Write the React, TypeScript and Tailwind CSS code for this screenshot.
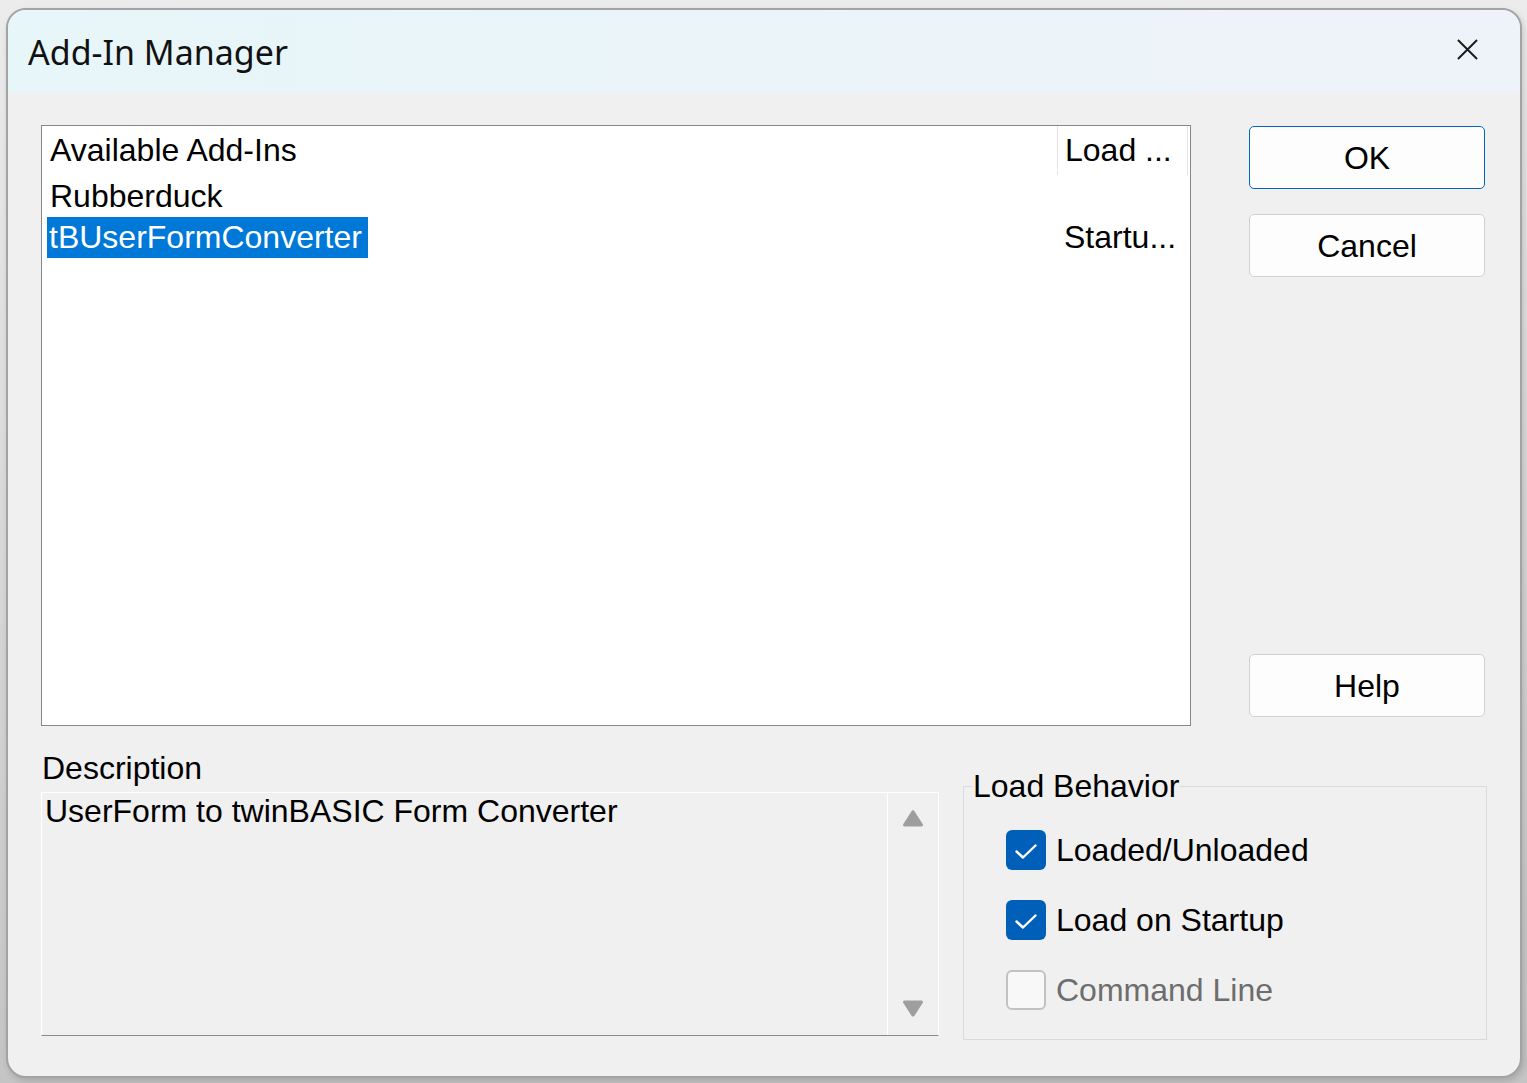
import React from "react";

const ui = "font-['Liberation_Sans',Arial,sans-serif]";

function Option({ label, checked, disabled }: { label: string; checked?: boolean; disabled?: boolean }) {
  return (
    <div className="flex items-center h-[40px]">
      {checked ? (
        <div className="w-[40px] h-[40px] rounded-[6px] bg-[#005fb8] flex items-center justify-center">
          <svg className="w-[40px] h-[40px]" viewBox="0 0 40 40" fill="none">
            <path d="M10.5 21.5 L17 27.5 L29.5 15.5" stroke="#ffffff" strokeWidth="2.4" strokeLinecap="round" strokeLinejoin="round" />
          </svg>
        </div>
      ) : (
        <div className="w-[40px] h-[40px] rounded-[6px] bg-[#f8f8f8] border-2 border-[#c2c2c2]" />
      )}
      <span className={`ml-[10px] text-[32px] leading-[36px] ${disabled ? "text-[#6d6d6d]" : "text-black"}`}>{label}</span>
    </div>
  );
}

function Btn({ children, focused }: { children: React.ReactNode; focused?: boolean }) {
  return (
    <button
      className={`w-[236px] h-[63px] rounded-[5px] bg-[#fdfdfd] text-[32px] text-black border ${
        focused ? "border-[#0067c0]" : "border-[#d0d0d0]"
      }`}
    >
      {children}
    </button>
  );
}

export default function App() {
  return (
    <div className={`w-[1527px] h-[1083px] bg-gradient-to-b from-[#ececec] to-[#c4c4c4] pt-[8px] pl-[6px] ${ui}`}>
      <div className="w-[1516px] h-[1070px] rounded-[20px] border-2 border-[#a3a3a3] bg-[#f0f0f0] overflow-hidden flex flex-col shadow-[2px_3px_6px_rgba(0,0,0,0.15)]">
        {/* title bar */}
        <div className="h-[83px] shrink-0 flex items-center justify-between bg-gradient-to-r from-[#e7f6f8] to-[#eef2f9] pl-[20px] pr-[42px]">
          <span className="text-[34px] text-[#111] font-['Noto_Sans','Open_Sans',sans-serif] mt-[1px]">Add-In Manager</span>
          <svg className="w-[21px] h-[21px] -mt-[4px]" viewBox="0 0 22 22" fill="none">
            <path d="M1 1 L21 21 M21 1 L1 21" stroke="#1a1a1a" strokeWidth="2" />
          </svg>
        </div>

        {/* top row */}
        <div className="flex pl-[33px] pt-[32px]">
          {/* list */}
          <div className="w-[1150px] h-[601px] bg-white border border-[#828790] flex flex-col text-[32px] text-black">
            <div className="flex h-[49px]">
              <div className="flex-1 pl-[8px] leading-[49px]">Available Add-Ins</div>
              <div className="w-[131px] border-l border-r border-[#e5e5e5] pl-[7px] leading-[49px] mr-[2px]">Load ...</div>
            </div>
            <div className="flex h-[41px] items-center">
              <div className="flex-1 pl-[8px]">Rubberduck</div>
            </div>
            <div className="flex h-[41px] items-center">
              <div className="flex-1 pl-[5px]">
                <span className="inline-block bg-[#0078d7] text-white h-[41px] leading-[41px] pl-[2px] pr-[6px]">tBUserFormConverter</span>
              </div>
              <div className="w-[133px] pl-[7px]">Startu...</div>
            </div>
          </div>

          {/* buttons */}
          <div className="ml-[58px] pt-[1px] h-[592px] flex flex-col">
            <Btn focused>OK</Btn>
            <div className="mt-[25px]">
              <Btn>Cancel</Btn>
            </div>
            <div className="flex-1" />
            <Btn>Help</Btn>
          </div>
        </div>

        {/* bottom row */}
        <div className="flex pl-[33px] mt-[22px]">
          <div className="w-[898px]">
            <div className="text-[32px] leading-[40px] h-[40px] pl-[1px] text-black">Description</div>
            <div className="mt-[4px] h-[244px] flex border-t border-l border-r border-white border-b border-b-[#8a8a8a]">
              <div className="flex-1 pl-[3px] text-[32px] leading-[36px] text-black">UserForm to twinBASIC Form Converter</div>
              <div className="w-[51px] border-l border-white flex flex-col items-center justify-between pt-[16px] pb-[17px]">
                <svg className="w-[24px] h-[19px]" viewBox="0 0 22 18">
                  <path d="M9.3 2.5 Q11 0 12.7 2.5 L20 14 Q21.5 16.5 18.5 16.5 L3.5 16.5 Q0.5 16.5 2 14 Z" fill="#9e9e9e" />
                </svg>
                <svg className="w-[24px] h-[19px]" viewBox="0 0 22 18">
                  <path d="M9.3 15.5 Q11 18 12.7 15.5 L20 4 Q21.5 1.5 18.5 1.5 L3.5 1.5 Q0.5 1.5 2 4 Z" fill="#9e9e9e" />
                </svg>
              </div>
            </div>
          </div>

          <fieldset className="ml-[24px] mt-[20px] w-[524px] h-[272px] border border-[#dadada] m-0 p-0">
            <legend className="ml-[8px] px-[1px] text-[32px] leading-[36px] text-black">Load Behavior</legend>
            <div className="mt-[26px] pl-[42px] flex flex-col gap-[30px]">
              <Option label="Loaded/Unloaded" checked />
              <Option label="Load on Startup" checked />
              <Option label="Command Line" disabled />
            </div>
          </fieldset>
        </div>
      </div>
    </div>
  );
}
